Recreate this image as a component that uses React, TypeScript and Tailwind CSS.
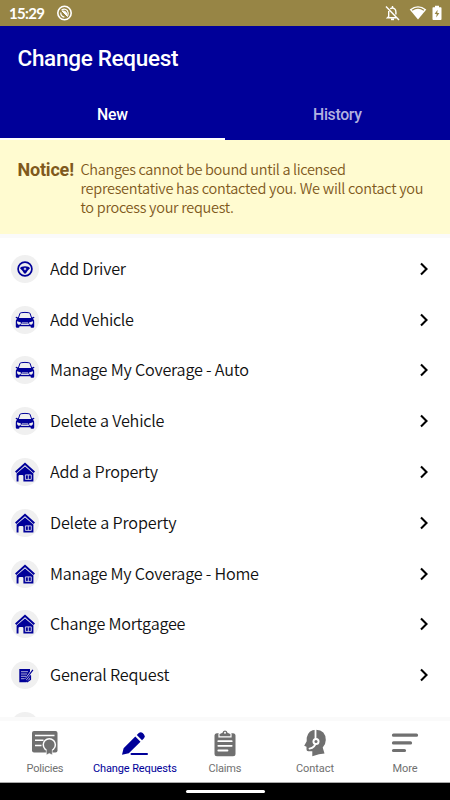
import React from 'react';

type Kind = 'wheel' | 'car' | 'house' | 'note';

const rows: { label: string; kind: Kind; width: number }[] = [
  { label: 'Add Driver', kind: 'wheel', width: 76 },
  { label: 'Add Vehicle', kind: 'car', width: 84 },
  { label: 'Manage My Coverage - Auto', kind: 'car', width: 199 },
  { label: 'Delete a Vehicle', kind: 'car', width: 114.5 },
  { label: 'Add a Property', kind: 'house', width: 108 },
  { label: 'Delete a Property', kind: 'house', width: 126.5 },
  { label: 'Manage My Coverage - Home', kind: 'house', width: 209 },
  { label: 'Change Mortgagee', kind: 'house', width: 135.5 },
  { label: 'General Request', kind: 'note', width: 119.5 },
];

function RowIcon({ kind }: { kind: Kind }) {
  if (kind === 'wheel')
    return (
      <svg width="20" height="20" viewBox="0 0 20 20">
        <circle cx="10" cy="10" r="6.9" fill="none" stroke="#000099" strokeWidth="1.7" />
        <path fillRule="evenodd" d="M5 9.2C5.6 6.5 14.4 6.5 15 9.2L12.8 11.6L10.8 14.6H9.2L7.2 11.6ZM10 8.7a1.3 1.3 0 1 0 0 2.6a1.3 1.3 0 0 0 0-2.6Z" fill="#000099" />
        <circle cx="10" cy="10" r=".6" fill="#000099" />
      </svg>
    );
  if (kind === 'car')
    return (
      <svg width="20" height="20" viewBox="0 0 20 20">
        <path d="M3.2 8.5L4.8 3.8Q5 2.8 6.2 2.7Q10 2.1 13.8 2.7Q15 2.8 15.2 3.8L16.8 8.5" fill="none" stroke="#000099" strokeWidth="1" />
        <path d="M.4 7.2Q1.2 6.3 2.6 7.2L3.2 8H16.8L17.4 7.2Q18.8 6.3 19.6 7.2L18 8.8Q19.5 10 19.2 12V16.5Q19.2 17.7 18 17.7H16.6Q15.5 17.7 15.5 16.2H4.5Q4.5 17.7 3.4 17.7H2Q.8 17.7.8 16.5V12Q.5 10 2 8.8Z" fill="#000099" />
        <path d="M2 11.3L6 12.6Q6.2 14.8 4 14.8Q1.9 14.4 2 11.3ZM18 11.3L14 12.6Q13.8 14.8 16 14.8Q18.1 14.4 18 11.3ZM7 12.4H13L14 15H6Z" fill="#f0f0f0" />
        <path d="M7.2 13.7H12.8" stroke="#000099" strokeWidth=".7" />
      </svg>
    );
  if (kind === 'house')
    return (
      <svg width="20" height="20" viewBox="0 0 20 20">
        <path d="M.7 10.2L10 1.8L19.3 10.2" fill="none" stroke="#000099" strokeWidth="2.1" />
        <path fillRule="evenodd" d="M1.6 11.4L10 4.6L18.4 11.4V19.5H8.4V14.2Q8.4 13 7.2 13H4.8Q3.5 13 3.5 14.2V19.5H1.6Z" fill="#000099" />
        <path d="M10.4 12.9H16.3V17.4H10.4ZM13.3 12.9V17.4" fill="none" stroke="#f0f0f0" strokeWidth=".8" />
      </svg>
    );
  return (
    <svg width="20" height="20" viewBox="0 0 20 20">
      <path d="M4.3 4H15V12.8L11.5 17.3H4.3Z" fill="#000099" />
      <path d="M6 6.7H13M6 9H12M6 11.3H11M6 13.7H9.5" stroke="#f0f0f0" strokeWidth=".7" />
      <path d="M17.7 4.8L11.7 13.2L10.3 14.5" fill="none" stroke="#f0f0f0" strokeWidth="2.2" />
      <path d="M17.9 4.8L11.8 13L10 15M15.5 10.3V14.5L12 17" fill="none" stroke="#000099" strokeWidth="1.2" />
    </svg>
  );
}

function Label({ x, y, width, children, className }: { x: number; y: number; width: number; children: string; className: string }) {
  return (
    <text x={x} y={y} textLength={width} lengthAdjust="spacing" fill="currentColor" className={className}>
      {children}
    </text>
  );
}

const tabIcons = [
  <svg key="policies" width="30" height="30" viewBox="0 0 30 30">
    <rect x="2" y="3" width="25.5" height="21.5" rx="2" fill="#707070" />
    <path d="M5 7.5H24.5M5 12.3H13.5M5 17.6H11.5" stroke="#fff" strokeWidth="1.5" />
    <circle cx="19.3" cy="16.7" r="6.8" fill="#fff" />
    <path d="M16.3 20V27L19.3 25.5L22.3 27V20" fill="#707070" stroke="#fff" strokeWidth=".6" />
    <circle cx="19.3" cy="16.7" r="5.3" fill="#707070" />
  </svg>,
  <svg key="change" width="30" height="30" viewBox="0 0 30 30">
    <path d="M2 26.7L3.6 20.2L15.3 8.6L20.5 13.8L8.8 25.3ZM16.8 7.1L18.8 5.1Q20.7 3.3 22.7 5.1L24 6.5Q25.8 8.4 24 10.3L22 12.3Z" fill="#000099" />
    <path d="M11.5 26H27" stroke="#000099" strokeWidth="2" strokeLinecap="round" />
  </svg>,
  <svg key="claims" width="30" height="30" viewBox="0 0 30 30">
    <rect x="4.5" y="5.2" width="21" height="23" rx="2.5" fill="#707070" />
    <path d="M9 8.8V5.8L12 4.3Q12.5 2 15 2Q17.5 2 18 4.3L21 5.8V8.8Z" fill="#707070" stroke="#fff" strokeWidth="1.2" />
    <circle cx="15" cy="4.7" r="1" fill="#fff" />
    <path d="M8.3 13.2H21.7M8.3 17.8H21.7M8.3 22.5H17.5" stroke="#fff" strokeWidth="1.8" strokeLinecap="round" />
  </svg>,
  <svg key="contact" width="30" height="30" viewBox="0 0 30 30">
    <path d="M12.3 28V23.3H8.2Q6.5 23.3 6.5 21.5V18.7L4.2 17.8L6.7 13.3V9.8Q8.3 1.8 16 1.8Q25.7 2.3 25.8 12Q25.8 16.2 22.7 19.5L24.5 25.5Q19.5 25.7 12.3 28.3Z" fill="#707070" />
    <path d="M15.5 1V11M15.8 14.2Q15.3 19.7 9.5 20.7" fill="none" stroke="#fff" strokeWidth="1.8" strokeLinecap="round" />
    <circle cx="16" cy="13.4" r="3.5" fill="#fff" />
    <circle cx="16" cy="13.4" r="1.5" fill="#707070" />
  </svg>,
  <svg key="more" width="30" height="30" viewBox="0 0 30 30">
    <path d="M3.5 7.2H26.5M3.5 14.9H20.5M3.5 22.5H14.5" stroke="#707070" strokeWidth="3.2" strokeLinecap="round" />
  </svg>,
];

const tabs = [
  { name: 'Policies', width: 37 },
  { name: 'Change Requests', width: 84 },
  { name: 'Claims', width: 33 },
  { name: 'Contact', width: 38 },
  { name: 'More', width: 25 },
];

export default function App() {
  return (
    <main className="flex h-[800px] w-[450px] flex-col overflow-hidden bg-white font-['Roboto',sans-serif]">
      <div className="flex h-[26px] shrink-0 items-center justify-between bg-[#978545] pl-2 pr-2 text-white">
        <div className="flex items-center">
          <svg width="40" height="26"><Label x={1} y={19} width={36} className="font-['Lato',sans-serif] text-[15px] font-bold">15:29</Label></svg>
          <svg className="ml-2" width="17" height="26" viewBox="0 0 17 26" fill="none" stroke="white">
            <circle cx="8.5" cy="13" r="6.7" strokeWidth="1.6" />
            <path d="M5.5 10.2Q8.5 8 11.3 10.5Q13 13 11.8 15.8M4.7 12.5Q4.7 16.5 8.4 17.2" strokeWidth="1.2" />
            <path d="M6 11L11.5 16.5L10 12.2Q8.2 10.5 6 11Z" fill="white" strokeWidth="1" />
          </svg>
        </div>
        <div className="flex items-center">
          <svg width="15" height="16" viewBox="0 0 15 16" fill="none" stroke="white" strokeWidth="1.4">
            <path d="M1 1.5L14 15M5.2 3.7Q7.5 2 9.8 4Q10.9 5 10.9 7V9.5M3.7 6V11.5L2.5 12.7H11.2M7.5 1V3" />
            <path d="M6 14.3H9" strokeWidth="1.8" />
          </svg>
          <svg className="ml-[9px]" width="18" height="16" viewBox="0 0 18 16">
            <path d="M.7 4.4Q9-1.7 17.3 4.4L9 14.5Z" fill="white" />
            <path d="M3.1 5.2Q9 1.1 14.9 5.2" fill="none" stroke="#978545" strokeWidth="1.1" />
          </svg>
          <svg className="ml-[5px]" width="10" height="16" viewBox="0 0 10 16">
            <path d="M.5 3Q.5 2.2 1.3 2.2H3V.8H7V2.2H8.7Q9.5 2.2 9.5 3V14Q9.5 15 8.7 15H1.3Q.5 15 .5 14Z" fill="white" />
            <path d="M5.6 4.7L2.6 9H4.7L4.2 12.5L7.4 8H5.3Z" fill="#978545" />
          </svg>
        </div>
      </div>
      <header className="flex h-[114px] shrink-0 flex-col bg-[#000099] text-white">
        <svg width="450" height="64"><Label x={17.5} y={39.5} width={161} className="text-[22.5px] font-medium">Change Request</Label></svg>
        <div className="grid h-[50px] grid-cols-2">
          <div className="border-b-2 border-white">
            <svg width="225" height="48"><Label x={97} y={29.5} width={31} className="text-[15.8px] font-medium">New</Label></svg>
          </div>
          <svg width="225" height="48" className="text-[#b2b2e0]"><Label x={88} y={29.5} width={49} className="text-[15.8px] font-medium">History</Label></svg>
        </div>
      </header>
      <section className="h-[94px] shrink-0 bg-[#fffbd0] text-[#80591c]">
        <svg width="450" height="94">
          <Label x={17.5} y={36} width={56.5} className="text-[18px] font-bold">Notice!</Label>
          <Label x={80.5} y={34.5} width={265.5} className="font-['Noto_Sans_CJK_SC',sans-serif] text-[14.5px] font-[350]">Changes cannot be bound until a licensed</Label>
          <Label x={80.5} y={53.5} width={343} className="font-['Noto_Sans_CJK_SC',sans-serif] text-[14.5px] font-[350]">representative has contacted you. We will contact you</Label>
          <Label x={80.5} y={72.5} width={153.5} className="font-['Noto_Sans_CJK_SC',sans-serif] text-[14.5px] font-[350]">to process your request.</Label>
        </svg>
      </section>
      <section className="min-h-0 flex-1 overflow-hidden border-y-4 border-[#fafafa] pt-[5.4px]">
        {rows.map(({ label, kind, width }) => (
          <div key={label} className="flex h-[50.8px] items-center pl-[11px] pr-[18px]">
            <div className="flex size-[28px] shrink-0 items-center justify-center rounded-full bg-[#f0f0f0]"><RowIcon kind={kind} /></div>
            <svg className="ml-[11px] shrink-0 text-[#111]" width="350" height="50">
              <Label x={0} y={31} width={width} className="font-['Noto_Sans_CJK_SC',sans-serif] text-[16.2px] font-[350]">{label}</Label>
            </svg>
            <svg className="ml-[17px] shrink-0" width="12" height="16" viewBox="0 0 12 16"><path d="M4 2.5L9.5 8L4 13.5" fill="none" stroke="#000" strokeWidth="2.1" /></svg>
          </div>
        ))}
        <div className="ml-[11px] mt-[11.5px] size-[28px] rounded-full bg-[#f0f0f0]" />
      </section>
      <nav className="grid h-[62px] shrink-0 grid-cols-5 border-b border-[#aaa]">
        {tabs.map(({ name, width }, i) => (
          <div key={name} className={i === 1 ? 'flex flex-col items-center pt-[7px] text-[#000099]' : 'flex flex-col items-center pt-[7px] text-[#707070]'}>
            {tabIcons[i]}
            <svg width="90" height="22"><Label x={(90 - width) / 2} y={14} width={width} className="text-[11px]">{name}</Label></svg>
          </div>
        ))}
      </nav>
      <div className="flex h-[17px] shrink-0 items-center justify-center bg-black"><div className="h-[3px] w-[79px] rounded-full bg-white" /></div>
    </main>
  );
}
